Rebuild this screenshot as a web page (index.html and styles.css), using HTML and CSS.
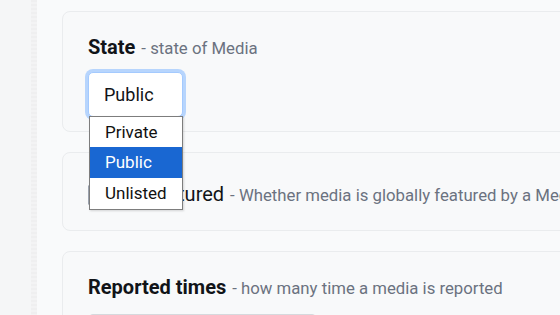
FILE: index.html
```html
<!DOCTYPE html>
<html>
<head>
<meta charset="utf-8">
<link rel="stylesheet" href="styles.css">
</head>
<body>
<div class="layout">
  <aside class="sidebar"></aside>
  <div class="divider"></div>
  <main class="main">
    <section class="card card-state">
      <div class="field-head"><span class="field-title">State</span><span class="field-desc">- state of Media</span></div>
      <div class="select-wrap">
        <div class="select">Public</div>
        <ul class="options">
          <li class="option">Private</li>
          <li class="option selected">Public</li>
          <li class="option">Unlisted</li>
        </ul>
      </div>
    </section>
    <section class="card card-featured">
      <div class="field-head"><span class="checkbox"></span><span class="field-label">Is Featured</span><span class="field-desc">- Whether media is globally featured by a MediaCMS editor</span></div>
    </section>
    <section class="card card-reported">
      <div class="field-head"><span class="field-title">Reported times</span><span class="field-desc">- how many time a media is reported</span></div>
      <div class="text-input"></div>
    </section>
  </main>
</div>
</body>
</html>
```

FILE: styles.css
```css
html, body {
  margin: 0;
  padding: 0;
  width: 560px;
  height: 315px;
  overflow: hidden;
  background: #f9fafb;
  font-family: Roboto, "Liberation Sans", sans-serif;
}
.layout {
  display: flex;
  height: 315px;
  overflow: hidden;
}
.sidebar {
  width: 31px;
  flex: none;
  background: #f5f6f7;
}
.divider {
  width: 6px;
  flex: none;
  background: repeating-linear-gradient(180deg, #efeff0 0 2px, #f3f3f4 2px 4px);
}
.main {
  flex: 1;
  padding: 11px 0 0 25px;
  min-width: 0;
  overflow: hidden;
}
.card {
  width: 560px;
  background: #f8f9fa;
  border: 1px solid #eaecee;
  border-radius: 8px;
  margin-bottom: 20px;
  box-sizing: border-box;
}
.card-state {
  padding: 21px 25px 14px;
}
.card-featured {
  padding: 27px 25px 21px;
}
.card-reported {
  padding: 21px 25px 20px;
}
.field-head {
  display: flex;
  align-items: baseline;
  white-space: nowrap;
  line-height: 28px;
}
.field-title {
  font-size: 20px;
  font-weight: 700;
  color: #111418;
}
.field-label {
  font-size: 20px;
  font-weight: 400;
  color: #111418;
}
.field-desc {
  font-size: 16.75px;
  color: #6b7280;
  margin-left: 6px;
}
.checkbox {
  width: 18px;
  height: 18px;
  border: 1px solid #9ca3af;
  border-radius: 3px;
  background: #fff;
  margin-right: 35px;
  align-self: center;
}
.select-wrap {
  position: relative;
  margin-top: 10px;
  width: 95px;
}
.select {
  box-sizing: border-box;
  height: 45px;
  width: 95px;
  border: 1px solid #a4cafe;
  border-radius: 5px;
  background: #fff;
  box-shadow: 0 0 0 3px #b7d5fd;
  font-size: 18px;
  color: #111418;
  padding-left: 15px;
  display: flex;
  align-items: center;
}
.options {
  position: absolute;
  left: 1px;
  top: 44px;
  width: 94px;
  box-sizing: border-box;
  margin: 0;
  padding: 0;
  list-style: none;
  background: #fff;
  border: 1px solid #7d7d7d;
  box-shadow: 1px 1px 2px rgba(0,0,0,0.15);
  z-index: 5;
}
.option {
  height: 31px;
  line-height: 31px;
  font-size: 17px;
  color: #111;
  padding-left: 15px;
}
.option:first-child {
  height: 30px;
  line-height: 30px;
}
.option.selected {
  background: #1967d2;
  color: #fff;
}
.text-input {
  margin-top: 12px;
  width: 227px;
  height: 40px;
  border: 1px solid #d6d9dd;
  border-radius: 5px;
  background: #eef0f2;
}
```
